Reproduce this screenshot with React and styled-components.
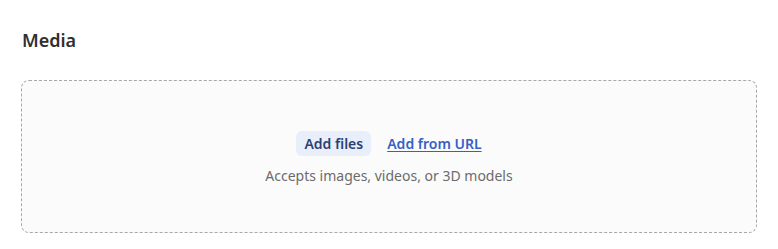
import React from "react";
import styled, { createGlobalStyle } from "styled-components";

const Global = createGlobalStyle`
  html, body { margin: 0; padding: 0; background: #ffffff; }
  body { font-family: "Noto Sans", "Open Sans", sans-serif; }
`;

const Page = styled.div`
  padding: 28px 21px 0 21px;
  width: 778px;
  box-sizing: border-box;
`;

const Title = styled.h2`
  margin: 0 0 28px 1px;
  font-size: 18px;
  line-height: 24px;
  font-weight: 600;
  color: #303030;
`;

const Drop = styled.div`
  box-sizing: border-box;
  height: 153px;
  border: 1px dashed #a8a8a8;
  border-radius: 8px;
  background: #fbfbfb;
  display: flex;
  flex-direction: column;
  align-items: center;
  justify-content: center;
  gap: 10px;
  padding-top: 4px;
`;

const Actions = styled.div`
  display: flex;
  align-items: center;
  gap: 16px;
`;

const AddButton = styled.button`
  border: none;
  background: #e8effb;
  color: #2d3f72;
  font-family: inherit;
  font-size: 14px;
  font-weight: 600;
  height: 25px;
  padding: 0 8px;
  border-radius: 6px;
  cursor: pointer;
`;

const Link = styled.a`
  color: #3560c6;
  font-size: 14px;
  font-weight: 600;
  text-decoration: underline;
  text-underline-offset: 2px;
  cursor: pointer;
`;

const Hint = styled.p`
  margin: 0;
  font-size: 14px;
  color: #6b6b6b;
  line-height: 20px;
`;

export default function App() {
  return (
    <>
      <Global />
      <Page>
        <Title>Media</Title>
        <Drop>
          <Actions>
            <AddButton>Add files</AddButton>
            <Link>Add from URL</Link>
          </Actions>
          <Hint>Accepts images, videos, or 3D models</Hint>
        </Drop>
      </Page>
    </>
  );
}
